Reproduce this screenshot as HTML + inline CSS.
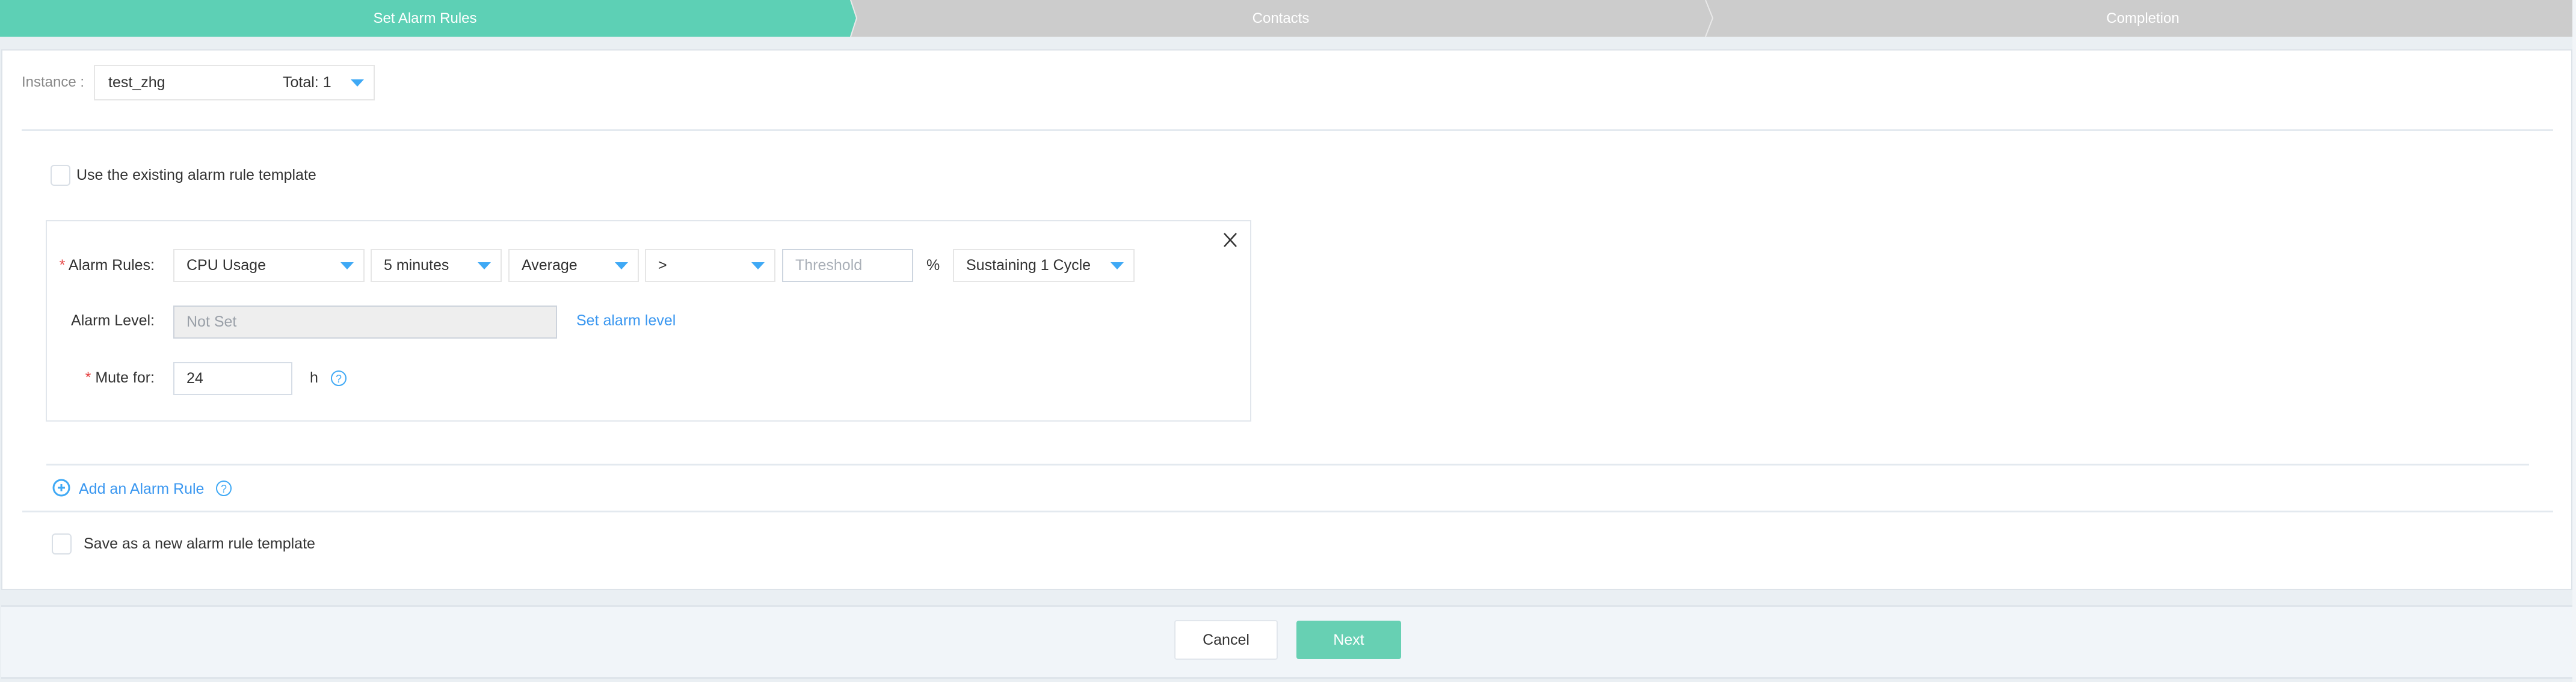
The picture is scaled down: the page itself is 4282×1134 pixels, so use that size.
<!DOCTYPE html>
<html><head><meta charset="utf-8"><style>
*{box-sizing:border-box;margin:0;padding:0}
body{width:4282px;height:1134px;background:#eaeff3;font-family:"Liberation Sans",Arial,sans-serif;font-size:25px;color:#333;position:relative;overflow:hidden}
.a{position:absolute}
.step{position:absolute;top:0;height:61px;line-height:61px;color:#fff;text-align:center;font-size:24px}
.sel{position:absolute;height:55px;border:2px solid #e6e6e6;background:#fff;line-height:51px;padding-left:20px;font-size:25px;color:#333}
.sel .tri{position:absolute;right:16px;top:20px;width:0;height:0;border-left:11px solid transparent;border-right:11px solid transparent;border-top:12px solid #3fa9f5}
.line{position:absolute;height:3px;background:#e3e9ef}
.cb{position:absolute;width:33px;height:35px;border:2px solid #d9dfe6;border-radius:6px;background:#fff}
.lbl{position:absolute;font-size:25px;color:#333;text-align:right}
.req{color:#e64545}
</style></head><body>
<svg class="a" style="left:0;top:0" width="4276" height="61">
<rect x="0" y="0" width="4276" height="61" fill="#cccccc"/>
<polygon points="0,0 1413,0 1423,30 1413,61 0,61" fill="#5dd0b5"/>
<polyline points="2835,0 2847,30 2835,61" fill="none" stroke="#e9e9e9" stroke-width="2"/>
<polyline points="1414,0 1424,30 1414,61" fill="none" stroke="#eaeaea" stroke-width="2"/>
</svg>
<div class="step" style="left:0;width:1413px">Set Alarm Rules</div>
<div class="step" style="left:1423px;width:1412px">Contacts</div>
<div class="step" style="left:2847px;width:1430px">Completion</div>
<div class="a" style="left:4276px;top:0;width:6px;height:1134px;background:#f2f5f8"></div>

<div class="a" style="left:2px;top:82px;width:4274px;height:899px;background:#fff;border:2px solid #dde3e9"></div>
<div class="a" style="left:36px;top:123px;color:#888;font-size:24px">Instance :</div>
<div class="sel" style="left:156px;top:108px;width:467px;height:59px;line-height:55px;padding-left:22px">test_zhg<span class="a" style="left:312px;top:0">Total: 1</span><span class="tri" style="top:22px"></span></div>
<div class="line" style="left:36px;top:215px;width:4208px"></div>
<div class="cb" style="left:84px;top:274px"></div>
<div class="a" style="left:127px;top:277px">Use the existing alarm rule template</div>

<div class="a" style="left:76px;top:366px;width:2004px;height:335px;border:2px solid #e1e6ec;background:#fff"></div>
<svg class="a" style="left:2033px;top:386px" width="24" height="26"><path d="M2 2L22 24M22 2L2 24" stroke="#333" stroke-width="2.5"/></svg>
<div class="lbl" style="left:40px;width:217px;top:427px"><span class="req">*</span> Alarm Rules:</div>
<div class="sel" style="left:288px;top:414px;width:318px">CPU Usage<span class="tri"></span></div>
<div class="sel" style="left:616px;top:414px;width:218px">5 minutes<span class="tri"></span></div>
<div class="sel" style="left:845px;top:414px;width:217px">Average<span class="tri"></span></div>
<div class="sel" style="left:1072px;top:414px;width:217px">&gt;<span class="tri"></span></div>
<div class="sel" style="left:1300px;top:414px;width:218px;border-color:#cdd5df;color:#aab0b8">Threshold</div>
<div class="a" style="left:1540px;top:427px">%</div>
<div class="sel" style="left:1584px;top:414px;width:302px">Sustaining 1 Cycle<span class="tri"></span></div>

<div class="lbl" style="left:40px;width:217px;top:519px">Alarm Level:</div>
<div class="sel" style="left:288px;top:508px;width:638px;background:#eeeeee;border-color:#cdd3dc;color:#9aa0a8">Not Set</div>
<div class="a" style="left:958px;top:519px;color:#3a97f0">Set alarm level</div>

<div class="lbl" style="left:40px;width:217px;top:614px"><span class="req">*</span> Mute for:</div>
<div class="sel" style="left:288px;top:602px;width:198px;border-color:#d6dde6">24</div>
<div class="a" style="left:515px;top:614px">h</div>
<svg class="a" style="left:548px;top:614px" width="30" height="30"><circle cx="15" cy="15" r="12" fill="none" stroke="#3fa9f5" stroke-width="2"/><text x="15" y="22" font-size="18" fill="#3fa9f5" text-anchor="middle" font-family="Liberation Sans">?</text></svg>

<div class="line" style="left:77px;top:771px;width:4127px"></div>
<svg class="a" style="left:86px;top:795px" width="32" height="32"><circle cx="16" cy="16" r="13" fill="none" stroke="#3fa9f5" stroke-width="3"/><path d="M16 10V22M10 16H22" stroke="#3fa9f5" stroke-width="3"/></svg>
<div class="a" style="left:131px;top:799px;color:#3a97f0">Add an Alarm Rule</div>
<svg class="a" style="left:357px;top:797px" width="30" height="30"><circle cx="15" cy="15" r="12" fill="none" stroke="#3fa9f5" stroke-width="2"/><text x="15" y="22" font-size="18" fill="#3fa9f5" text-anchor="middle" font-family="Liberation Sans">?</text></svg>
<div class="line" style="left:37px;top:849px;width:4207px"></div>
<div class="cb" style="left:86px;top:887px"></div>
<div class="a" style="left:139px;top:890px">Save as a new alarm rule template</div>

<div class="a" style="left:2px;top:1006px;width:4274px;height:123px;background:#f1f5f9;border-top:3px solid #dfe5eb;border-bottom:3px solid #dfe5eb"></div>
<div class="a" style="left:1952px;top:1031px;width:172px;height:66px;background:#fff;border:2px solid #e1e6ec;border-radius:4px;text-align:center;line-height:62px">Cancel</div>
<div class="a" style="left:2155px;top:1032px;width:174px;height:64px;background:#67d0b3;border-radius:4px;text-align:center;line-height:64px;color:#fff">Next</div>
</body></html>
